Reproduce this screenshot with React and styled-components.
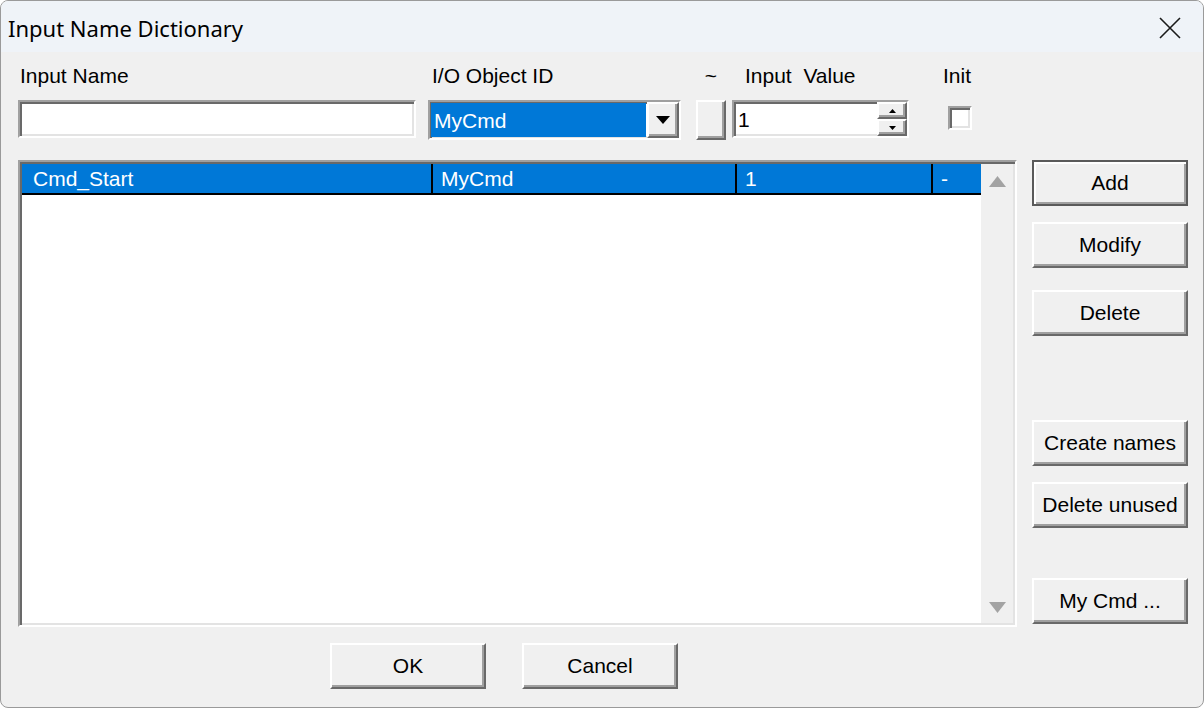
import React from 'react'
import styled, { createGlobalStyle, css } from 'styled-components'

const GlobalStyle = createGlobalStyle`
  html, body {
    margin: 0;
    background: #ffffff;
  }
  body {
    font-family: "Liberation Sans", Arial, sans-serif;
  }
`

const sunken = css`
  box-sizing: border-box;
  border: 2px solid;
  border-color: #a0a0a0 #ffffff #ffffff #a0a0a0;
  box-shadow: inset 2px 2px 0 #696969, inset -2px -2px 0 #e3e3e3;
  background: #ffffff;
`

const raised = css`
  box-sizing: border-box;
  border: 2px solid;
  border-color: #ffffff #696969 #696969 #ffffff;
  box-shadow: inset -2px -2px 0 #a0a0a0;
  background: #f0f0f0;
`

const Window = styled.div`
  width: 1204px;
  height: 708px;
  box-sizing: border-box;
  border: 1px solid #9a9a9a;
  border-radius: 8px;
  overflow: hidden;
  background: #f0f0f0;
  display: flex;
  flex-direction: column;
`

const TitleBar = styled.div`
  height: 51px;
  flex-shrink: 0;
  background: #eff3f8;
  display: flex;
  align-items: center;
  justify-content: space-between;
  padding: 2px 22px 0 7px;
  box-sizing: border-box;
`

const Title = styled.span`
  font-family: "Noto Sans", "Open Sans", sans-serif;
  font-size: 22px;
  color: #000;
`

const Content = styled.div`
  display: flex;
  flex-direction: column;
  padding: 12px 0 0 17px;
`

const FieldRow = styled.div`
  display: flex;
  align-items: flex-start;
`

const Field = styled.div`
  display: flex;
  flex-direction: column;
  width: ${p => p.$w}px;
  margin-left: ${p => p.$ml || 0}px;
`

const Label = styled.div`
  height: 24px;
  line-height: 24px;
  font-size: 21px;
  color: #000;
  white-space: nowrap;
  margin-left: ${p => p.$indent || 0}px;
  margin-bottom: 12px;
  text-align: ${p => (p.$center ? 'center' : 'left')};
`

const TextBox = styled.div`
  ${sunken};
  height: 38px;
  font-size: 21px;
  line-height: 30px;
  padding-left: 4px;
`

const Combo = styled.div`
  ${sunken};
  height: 40px;
  display: flex;
`

const ComboValue = styled.div`
  flex: 1;
  margin: 1px;
  background: #0078d7;
  color: #fff;
  font-size: 21px;
  line-height: 30px;
  padding: 3px 0 0 3px;
  box-sizing: border-box;
`

const DropButton = styled.div`
  ${raised};
  width: 32px;
  display: flex;
  align-items: center;
  justify-content: center;
`

const TildeButton = styled.div`
  ${raised};
  height: 40px;
`

const Spin = styled.div`
  ${sunken};
  height: 38px;
  display: flex;
`

const SpinValue = styled.div`
  flex: 1;
  font-size: 21px;
  line-height: 30px;
  padding: 3px 0 0 4px;
  box-sizing: border-box;
`

const SpinButtons = styled.div`
  width: 30px;
  display: flex;
  flex-direction: column;
`

const SpinButton = styled.div`
  ${raised};
  flex: 1;
  display: flex;
  align-items: center;
  justify-content: center;
`

const CheckBox = styled.div`
  ${sunken};
  width: 24px;
  height: 24px;
  margin-top: 6px;
`

const Middle = styled.div`
  display: flex;
  margin-top: 20px;
`

const ListBox = styled.div`
  ${sunken};
  width: 999px;
  height: 467px;
  display: flex;
  padding: 2px;
`

const Rows = styled.div`
  flex: 1;
`

const ListRow = styled.div`
  display: grid;
  grid-template-columns: 409px 304px 196px 1fr;
  height: 31px;
  box-sizing: border-box;
  border-bottom: 2px solid #000;
  background: ${p => (p.$selected ? '#0078d7' : '#fff')};
  color: ${p => (p.$selected ? '#fff' : '#000')};
`

const Cell = styled.div`
  font-size: 21px;
  line-height: 29px;
  padding-left: ${p => (p.$first ? 11 : 8)}px;
  border-left: ${p => (p.$first ? 'none' : '2px solid #000')};
  white-space: nowrap;
  overflow: hidden;
`

const ScrollBar = styled.div`
  width: 32px;
  background: #f0f0f0;
  display: flex;
  flex-direction: column;
  align-items: center;
  justify-content: space-between;
  padding: 12px 0 10px;
  box-sizing: border-box;
`

const SideButtons = styled.div`
  display: flex;
  flex-direction: column;
  margin-left: 15px;
`

const Button = styled.div`
  ${raised};
  width: 156px;
  height: 46px;
  margin-top: ${p => p.$mt || 0}px;
  margin-left: ${p => p.$ml || 0}px;
  font-size: 21px;
  color: #000;
  display: flex;
  align-items: center;
  justify-content: center;
  ${p => p.$default && css`
    border: 2px solid #5a5a5a;
    box-shadow: inset 2px 2px 0 #ffffff, inset -2px -2px 0 #a0a0a0;
  `}
`

const BottomRow = styled.div`
  display: flex;
  margin-top: 16px;
`

function CloseIcon () {
  return (
    <svg width="22" height="22" viewBox="0 0 22 22">
      <path d="M1 1 L21 21 M21 1 L1 21" stroke="#1a1a1a" strokeWidth="1.6" fill="none"/>
    </svg>
  )
}

function Arrow ({ up, w = 12, h = 7, color = '#000' }) {
  return (
    <svg width={w} height={h} viewBox={`0 0 ${w} ${h}`}>
      {up
        ? <polygon points={`0,${h} ${w},${h} ${w / 2},0`} fill={color}/>
        : <polygon points={`0,0 ${w},0 ${w / 2},${h}`} fill={color}/>}
    </svg>
  )
}

const rows = [
  { name: 'Cmd_Start', id: 'MyCmd', value: '1', init: '-' },
]

export default function App () {
  return (
    <>
      <GlobalStyle/>
      <Window>
        <TitleBar>
          <Title>Input Name Dictionary</Title>
          <CloseIcon/>
        </TitleBar>
        <Content>
          <FieldRow>
            <Field $w={398}>
              <Label $indent={2}>Input Name</Label>
              <TextBox/>
            </Field>
            <Field $w={253} $ml={12}>
              <Label $indent={4}>I/O Object ID</Label>
              <Combo>
                <ComboValue>MyCmd</ComboValue>
                <DropButton><Arrow w={14} h={8}/></DropButton>
              </Combo>
            </Field>
            <Field $w={30} $ml={15}>
              <Label $center>~</Label>
              <TildeButton/>
            </Field>
            <Field $w={177} $ml={6}>
              <Label $indent={13}>Input&nbsp; Value</Label>
              <Spin>
                <SpinValue>1</SpinValue>
                <SpinButtons>
                  <SpinButton><Arrow up w={7} h={4}/></SpinButton>
                  <SpinButton><Arrow w={7} h={4}/></SpinButton>
                </SpinButtons>
              </Spin>
            </Field>
            <Field $w={24} $ml={39}>
              <Label $indent={-5}>Init</Label>
              <CheckBox/>
            </Field>
          </FieldRow>

          <Middle>
            <ListBox>
              <Rows>
                {rows.map(r => (
                  <ListRow key={r.name} $selected>
                    <Cell $first>{r.name}</Cell>
                    <Cell>{r.id}</Cell>
                    <Cell>{r.value}</Cell>
                    <Cell>{r.init}</Cell>
                  </ListRow>
                ))}
              </Rows>
              <ScrollBar>
                <Arrow up w={17} h={11} color="#a3a3a3"/>
                <Arrow w={17} h={11} color="#a3a3a3"/>
              </ScrollBar>
            </ListBox>
            <SideButtons>
              <Button $default>Add</Button>
              <Button $mt={16}>Modify</Button>
              <Button $mt={22}>Delete</Button>
              <Button $mt={84}>Create names</Button>
              <Button $mt={16}>Delete unused</Button>
              <Button $mt={50}>My Cmd ...</Button>
            </SideButtons>
          </Middle>

          <BottomRow>
            <Button $ml={312}>OK</Button>
            <Button $ml={36}>Cancel</Button>
          </BottomRow>
        </Content>
      </Window>
    </>
  )
}
